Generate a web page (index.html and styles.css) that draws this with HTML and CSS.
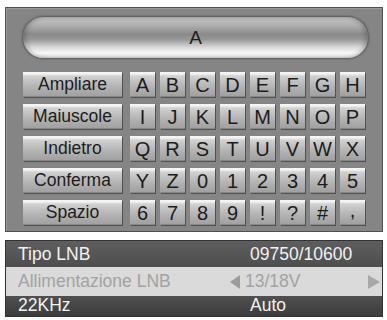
FILE: index.html
```
<!DOCTYPE html>
<html>
<head>
<meta charset="utf-8">
<link rel="stylesheet" href="styles.css">
</head>
<body>
<div class="page">
  <div class="kbd-panel">
    <div class="input-pill">A</div>
    <div class="keys">
      <div class="key wide">Ampliare</div>
      <div class="key">A</div><div class="key">B</div><div class="key">C</div><div class="key">D</div><div class="key">E</div><div class="key">F</div><div class="key">G</div><div class="key">H</div>
      <div class="key wide">Maiuscole</div>
      <div class="key">I</div><div class="key">J</div><div class="key">K</div><div class="key">L</div><div class="key">M</div><div class="key">N</div><div class="key">O</div><div class="key">P</div>
      <div class="key wide">Indietro</div>
      <div class="key">Q</div><div class="key">R</div><div class="key">S</div><div class="key">T</div><div class="key">U</div><div class="key">V</div><div class="key">W</div><div class="key">X</div>
      <div class="key wide">Conferma</div>
      <div class="key">Y</div><div class="key">Z</div><div class="key">0</div><div class="key">1</div><div class="key">2</div><div class="key">3</div><div class="key">4</div><div class="key">5</div>
      <div class="key wide">Spazio</div>
      <div class="key">6</div><div class="key">7</div><div class="key">8</div><div class="key">9</div><div class="key">!</div><div class="key">?</div><div class="key">#</div><div class="key comma">,</div>
    </div>
  </div>
  <div class="menu">
    <div class="row dark r1"><span class="label">Tipo LNB</span><span class="value">09750/10600</span></div>
    <div class="row light r2"><span class="label">Allimentazione LNB</span><span class="value sel"><span class="arr left"></span><span class="vtext">13/18V</span><span class="arr right"></span></span></div>
    <div class="row dark r3"><span class="label">22KHz</span><span class="value">Auto</span></div>
  </div>
</div>
</body>
</html>
```
FILE: styles.css
```
* { box-sizing: border-box; }
html, body { margin: 0; padding: 0; background: #fff; }
body { font-family: "Liberation Sans", Arial, sans-serif; width: 387px; height: 320px; overflow: hidden; }
.page { padding: 7px 4px 0 5px; }

.kbd-panel {
  width: 378px;
  height: 225px;
  border: 1px solid #505050;
  background: #858585;
  padding: 9px 0 0 17px;
  box-shadow: inset 1px 1px 0 #9a9a9a;
}
.input-pill {
  width: 345px;
  height: 41px;
  border-radius: 21px;
  background: linear-gradient(to bottom, #c4c4c4 0%, #b0b0b0 20%, #8a8a8a 42%, #989898 55%, #dcdcdc 75%, #f8f8f8 88%, #e6e6e6 100%);
  box-shadow: 0 0 2px 1px rgba(40,40,40,0.5), inset 3px 0 4px rgba(0,0,0,0.18), inset -3px 0 4px rgba(0,0,0,0.18);
  display: flex;
  align-items: center;
  justify-content: center;
  font-size: 19px;
  color: #1e1e1e;
  padding-top: 1px;
}
.keys {
  margin-top: 14px;
  display: grid;
  grid-template-columns: 102px repeat(8, 25px);
  grid-auto-rows: 25px;
  column-gap: 5px;
  row-gap: 7px;
}
.key {
  display: flex;
  align-items: center;
  justify-content: center;
  font-size: 20px;
  color: #1c1c1c;
  background: linear-gradient(to bottom, #f6f6f6 0, #f2f2f2 2px, #d2d2d2 4px, #bcbcbc 45%, #a8a8a8 80%, #a0a0a0 100%);
  box-shadow: 1px 1px 0 #505050, inset 0 -1px 0 #888;
  padding-top: 2px;
}
.key.wide {
  margin-right: 3px;
  font-size: 17.5px;
  padding-top: 0;
}
.key.comma { align-items: flex-end; padding-bottom: 3px; }

.menu {
  margin-top: 8px;
  width: 378px;
  border: 1px solid #333;
  font-size: 17.5px;
}
.row {
  display: flex;
  align-items: center;
  padding-left: 12px;
}
.row.r1 { height: 26px; }
.row.r2 { height: 29px; }
.row.r3 { height: 20px; align-items: flex-end; }
.row.dark { background: linear-gradient(to bottom, #5e5e5e, #4e4e4e); color: #f2f2f2; }
.row.r3.dark { background: linear-gradient(to bottom, #505050, #3c3c3c); }
.row.light { background: #dadada; color: #a2a2a2; }
.label { flex: 0 0 212px; }
.value { padding-left: 20px; flex: 1; }
.value.sel { display: flex; align-items: center; padding-left: 0; padding-right: 2px; }
.arr { width: 0; height: 0; border-top: 7px solid transparent; border-bottom: 7px solid transparent; }
.arr.left { border-right: 10px solid #9c9c9c; margin-right: 5px; }
.arr.right { border-left: 12px solid #a8a8a8; margin-left: auto; }
```
